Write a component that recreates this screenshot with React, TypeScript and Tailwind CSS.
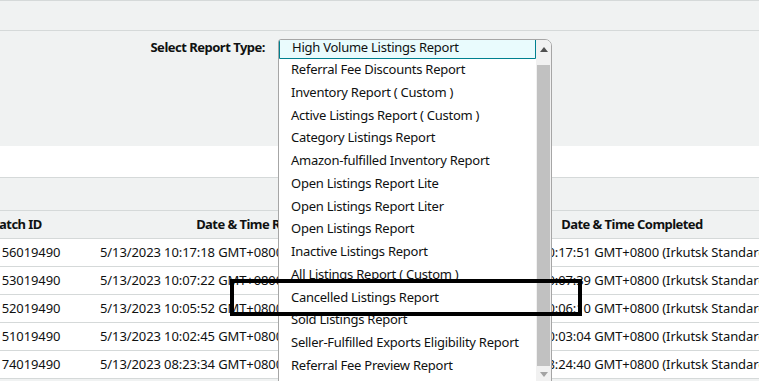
import React from 'react'

const options = [
  'High Volume Listings Report',
  'Referral Fee Discounts Report',
  'Inventory Report ( Custom )',
  'Active Listings Report ( Custom )',
  'Category Listings Report',
  'Amazon-fulfilled Inventory Report',
  'Open Listings Report Lite',
  'Open Listings Report Liter',
  'Open Listings Report',
  'Inactive Listings Report',
  'All Listings Report ( Custom )',
  'Cancelled Listings Report',
  'Sold Listings Report',
  'Seller-Fulfilled Exports Eligibility Report',
  'Referral Fee Preview Report',
]

const rows = [
  { id: '3156019490', requested: '5/13/2023 10:17:18 GMT+0800 (Irkutsk Standard Time)', completed: '5/13/2023 10:17:51 GMT+0800 (Irkutsk Standard Time)' },
  { id: '3153019490', requested: '5/13/2023 10:07:22 GMT+0800 (Irkutsk Standard Time)', completed: '5/13/2023 10:07:39 GMT+0800 (Irkutsk Standard Time)' },
  { id: '3152019490', requested: '5/13/2023 10:05:52 GMT+0800 (Irkutsk Standard Time)', completed: '5/13/2023 10:06:10 GMT+0800 (Irkutsk Standard Time)' },
  { id: '3151019490', requested: '5/13/2023 10:02:45 GMT+0800 (Irkutsk Standard Time)', completed: '5/13/2023 10:03:04 GMT+0800 (Irkutsk Standard Time)' },
  { id: '3174019490', requested: '5/13/2023 08:23:34 GMT+0800 (Irkutsk Standard Time)', completed: '5/13/2023 08:24:40 GMT+0800 (Irkutsk Standard Time)' },
]

export default function App() {
  return (
    <div className="relative w-[759px] h-[381px] overflow-hidden bg-[#f0f2f2] text-[13px] tracking-[-0.25px] text-[#0f1111] font-['Noto_Sans',sans-serif]">
      {/* top strip */}
      <div className="h-[31px] border-t border-b border-[#d5d9d9]" />

      {/* report type form */}
      <div className="h-[115px] flex">
        <div className="w-[265px] flex justify-end pt-[7px] font-bold tracking-[-0.5px] whitespace-nowrap">Select Report Type:</div>
      </div>

      <div className="h-[31px] bg-white" />
      <div className="h-[33px] border-t border-[#d5d9d9]" />

      {/* table */}
      <div className="ml-[-17px] whitespace-nowrap">
        <div className="flex h-[29px] items-center border-t border-b border-[#d5d9d9] font-bold tracking-[-0.55px]">
          <div className="w-[107px] shrink-0 pl-[8px]">Batch ID</div>
          <div className="w-[352px] shrink-0 text-center">Date &amp; Time Requested</div>
          <div className="w-[380px] shrink-0 text-center">Date &amp; Time Completed</div>
        </div>
        {rows.map((r) => (
          <div key={r.id} className="flex h-[28px] items-center bg-white border-b border-[#d5d9d9] tracking-[-0.1px]">
            <div className="w-[107px] shrink-0 pl-[4px]">{r.id}</div>
            <div className="w-[352px] shrink-0 pl-[10px] overflow-hidden">{r.requested}</div>
            <div className="w-[380px] shrink-0 pl-[34px] overflow-hidden">{r.completed}</div>
          </div>
        ))}
      </div>

      {/* open select list */}
      <div className="absolute left-[278px] top-[39px] w-[274px] h-[350px] bg-white border border-[#a6a6a6] rounded-tl-[3px] rounded-tr-[7px] overflow-hidden flex">
        <div className="flex-1 overflow-hidden">
          <div className="mt-[-4px]">
            {options.map((o, i) => (
              <div
                key={o}
                className={
                  i === 0
                    ? 'h-[22.72px] flex items-center pl-[12px] whitespace-nowrap bg-[#e9fbfd] border border-[#00808f] rounded-tl-[3px]'
                    : 'h-[22.72px] flex items-center pl-[12px] whitespace-nowrap'
                }
              >
                {o}
              </div>
            ))}
          </div>
        </div>
        {/* scrollbar */}
        <div className="w-[15px] bg-[#f1f1f1] flex flex-col items-center">
          <div className="h-[18px] flex items-center justify-center">
            <svg width="8" height="5" viewBox="0 0 8 5"><path d="M0 5 L4 0 L8 5 Z" fill="#505050" /></svg>
          </div>
          <div className="w-[13px] h-[301px] mt-[7px] bg-[#c1c1c1]" />
          <div className="h-[16px] flex items-center justify-center">
            <svg width="8" height="5" viewBox="0 0 8 5"><path d="M0 0 L8 0 L4 5 Z" fill="#a3a3a3" /></svg>
          </div>
        </div>
      </div>

      {/* annotation box */}
      <div className="absolute left-[230px] top-[279px] w-[352px] h-[37px] border-[4px] border-black" />
    </div>
  )
}
